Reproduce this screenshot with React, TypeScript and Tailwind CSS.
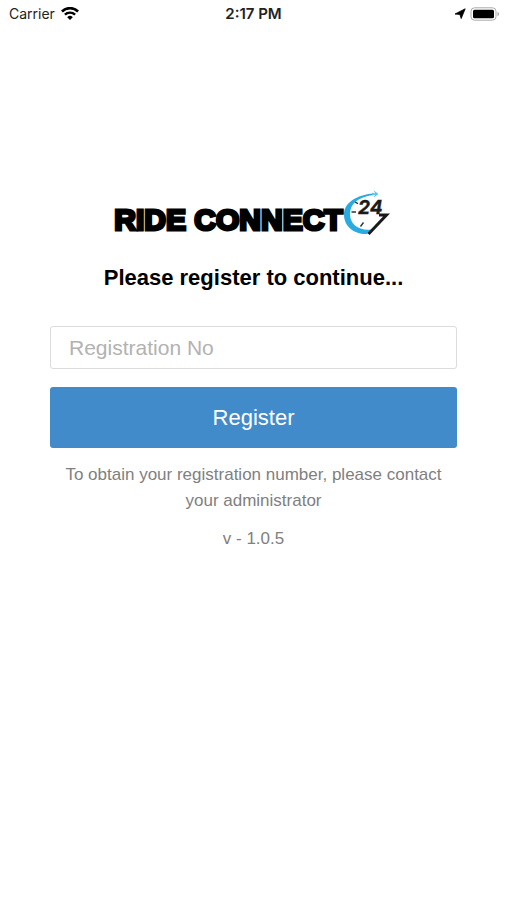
import { useState } from 'react';

function WifiIcon() {
  return (
    <svg viewBox="0 0 18 14" className="h-3.5 w-[18px]" fill="none" stroke="#000" aria-hidden="true">
      <path d="M.9 4.500a11.400 11.400 0 0 1 16.200 0" strokeWidth="2.600" />
      <path d="M3.900 7.700a7.200 7.200 0 0 1 10.200 0" strokeWidth="2.400" />
      <path d="M9 13 6.200 10.200a4 4 0 0 1 5.600 0Z" fill="#000" stroke="none" />
    </svg>
  );
}

function LocationIcon() {
  return (
    <svg viewBox="0 0 12 12" className="size-3" aria-hidden="true">
      <path d="M11.200 .8 7.200 10.600 5.900 6.500 1 6Z" fill="#000" stroke="#000" strokeWidth=".8" strokeLinejoin="round" />
    </svg>
  );
}

function BatteryIcon() {
  return (
    <svg viewBox="0 0 30 14" className="h-3.5 w-[30px]" aria-hidden="true">
      <rect x="1" y=".8" width="25" height="12.400" rx="3.500" fill="none" stroke="#aaa" />
      <rect x="3" y="2.700" width="21" height="8.600" rx="1.500" fill="#000" />
      <path d="M27.500 5v4c1.100-.4 1.600-1.100 1.600-2s-.5-1.600-1.600-2Z" fill="#aaa" />
    </svg>
  );
}

function StatusBar() {
  return (
    <header className="grid h-7 grid-cols-3 items-center px-[7px] font-['Inter',sans-serif] text-[15px] text-[#222]">
      <div className="flex items-center gap-1.5 pl-0.5">
        <span className="text-sm">Carrier</span>
        <WifiIcon />
      </div>
      <span className="text-center font-semibold">2:17 PM</span>
      <div className="flex items-center justify-end gap-1">
        <LocationIcon />
        <BatteryIcon />
      </div>
    </header>
  );
}

function ClockMark() {
  return (
    <svg viewBox="0 0 50 48" className="h-12 w-[50px] shrink-0" aria-hidden="true">
      {/* dial */}
      <path
        d="M30 5.500C14 7 1 14.500 1 26.500C1 38.500 11 46.500 24 46L28.500 41.500C16 43 7 36.500 7 26C7 16 15 9 30 7Z"
        fill="#29abe2"
      />
      <path d="M29 4.800 35 6 29 7.600ZM30.500 2.300 35.500 6 30.500 9.700 32.500 6Z" fill="#5fc3ec" />
      <path d="M12 14l3 1.600M8.500 24h4.500M20.500 34.500l-3 4" stroke="#333" strokeWidth="1.400" />
      <text
        x="15"
        y="26"
        fontSize="19"
        fontWeight="700"
        fontStyle="italic"
        fontFamily="Inter, sans-serif"
        fill="#1a1a1a"
        stroke="#1a1a1a"
        strokeWidth=".4"
      >
        24
      </text>
      {/* long hand that sweeps down from the numerals */}
      <path d="M36 27H43.500L25.500 46" fill="none" stroke="#1a1a1a" strokeWidth="3" />
    </svg>
  );
}

function Logo() {
  return (
    <div className="flex items-end justify-center">
      <span className="font-['Liberation_Sans',Arial,sans-serif] text-[30px] leading-8 font-bold whitespace-nowrap text-black [-webkit-text-stroke:3px_#000]">
        RIDE CONNECT
      </span>
      <ClockMark />
    </div>
  );
}

export default function App() {
  const [regNo, setRegNo] = useState('');

  return (
    <div className="min-h-screen bg-white font-['Liberation_Sans',Arial,sans-serif]">
      <StatusBar />
      <main className="px-[50px] pt-40 text-center">
        <Logo />
        <h1 className="mt-[26px] text-[22px] leading-8 font-bold text-black">Please register to continue...</h1>
        <form className="mt-8" onSubmit={e => e.preventDefault()}>
          <input
            type="text"
            aria-label="Registration No"
            placeholder="Registration No"
            value={regNo}
            onChange={e => setRegNo(e.target.value)}
            className="block h-[43px] w-full rounded-[3px] border border-[#dcdcdc] px-[18px] text-[21px] text-gray-800 outline-none placeholder:text-[#b2b2b2]"
          />
          <button
            type="submit"
            className="mt-[18px] block h-[61px] w-full rounded-[3px] bg-[#428bca] text-[22px] text-white"
          >
            Register
          </button>
        </form>
        <p className="mt-3.5 text-[17px] leading-[26px] text-[#808080]">
          To obtain your registration number, please contact your administrator
        </p>
        <p className="mt-3 text-[17px] leading-[26px] text-[#808080]">v - 1.0.5</p>
      </main>
    </div>
  );
}
